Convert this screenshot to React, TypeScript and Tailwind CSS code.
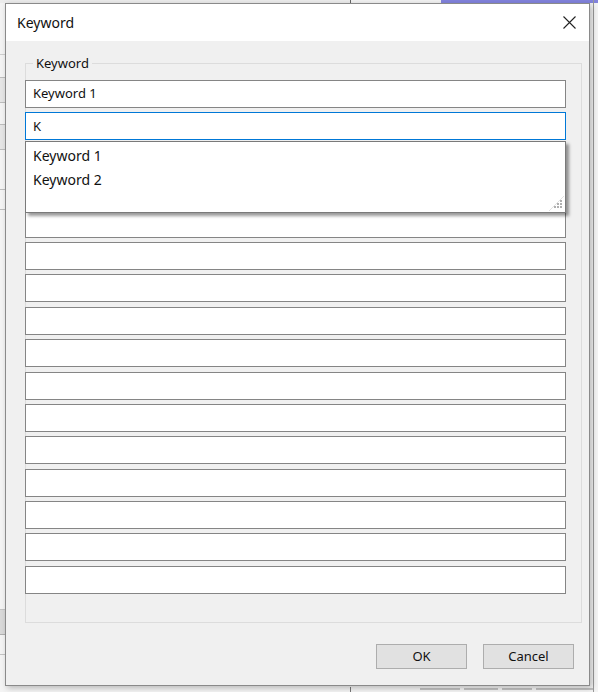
const FONT = { fontFamily: '"Noto Sans", "Open Sans", "Liberation Sans", sans-serif' }

const emptyRows = Array.from({ length: 14 })

function CloseIcon() {
  return (
    <svg width="13" height="13" viewBox="0 0 13 13" fill="none" stroke="#222" strokeWidth="1.1">
      <path d="M0.5 0.5 L12.5 12.5 M12.5 0.5 L0.5 12.5" />
    </svg>
  )
}

function ResizeGrip() {
  return (
    <svg width="16" height="16" viewBox="0 0 16 16" className="absolute right-[1px] bottom-[1px]">
      <path d="M16 1 L1 16" stroke="#e2e2e2" strokeWidth="1" />
      <g fill="#b0b0b0">
        <rect x="12" y="5" width="2" height="2" />
        <rect x="9" y="8" width="2" height="2" />
        <rect x="12" y="8" width="2" height="2" />
        <rect x="6" y="11" width="2" height="2" />
        <rect x="9" y="11" width="2" height="2" />
        <rect x="12" y="11" width="2" height="2" />
      </g>
    </svg>
  )
}

function Field({ value, focused }: { value?: string; focused?: boolean }) {
  return (
    <div
      className={`h-[28px] w-[541px] -ml-px flex items-center pl-[7px] bg-white text-[13px] text-[#111] border ${
        focused ? 'border-[#0078d7]' : 'border-[#858585]'
      }`}
    >
      {value}
    </div>
  )
}

export default function App() {
  return (
    <div className="relative w-[598px] h-[692px] overflow-hidden bg-[#f4f4f4]" style={FONT}>
      {/* app behind the dialog */}
      <div className="absolute left-0 top-0 w-[598px] h-[3px] flex">
        <div className="w-[350px] bg-[#ececec]" />
        <div className="w-px bg-[#666]" />
        <div className="w-[90px] bg-[#f2f2f2]" />
        <div className="flex-1 bg-[#8283dc]" />
      </div>
      <div className="absolute left-0 top-[40px] w-[5px] flex flex-col">
        <div className="h-[15px] border-b border-[#cfcfcf]" />
        <div className="h-[23px] border-b border-[#bdbdbd]" />
        <div className="h-[25px] border-b border-[#bdbdbd] bg-[#e6e6e6]" />
        <div className="h-[22px] border-b border-[#bdbdbd]" />
        <div className="h-[25px] border-b border-[#bdbdbd] bg-[#e6e6e6]" />
        <div className="h-[40px] border-b border-[#bdbdbd]" />
        <div className="h-[20px] border-b border-[#bdbdbd]" />
      </div>
      <div className="absolute left-0 top-[590px] w-[5px] flex flex-col">
        <div className="h-[20px] border-b border-[#c4c4c4]" />
        <div className="h-[25px] border-b border-[#b0b0b0] bg-[#d9d9d9]" />
        <div className="h-[20px] border-b border-[#c4c4c4]" />
      </div>
      <div className="absolute left-[350px] top-[687px] w-px h-[5px] bg-[#777]" />
      <div className="absolute left-[420px] top-[688px] flex items-start gap-[4px]">
        <div className="w-[40px] h-[2px] bg-[#c2c2c2]" />
        <div className="w-[34px] h-[2px] bg-[#c2c2c2]" />
        <div className="w-[30px] h-[2px] bg-[#c2c2c2]" />
        <div className="w-[58px] h-[2px] bg-[#c2c2c2]" />
      </div>
      <div className="absolute left-[593px] top-0 w-px h-[692px] bg-[#9a9a9a]" />

      {/* dialog */}
      <div className="absolute left-[5px] top-[3px] w-[585px] h-[683px] flex flex-col border border-[#8a8a8a] bg-[#f0f0f0] shadow-[2px_2px_6px_rgba(0,0,0,0.25)]">
        <div className="h-[37px] shrink-0 flex items-center justify-between bg-white pl-[11px] pr-[13px]">
          <span className="text-[14px] text-[#111]">Keyword</span>
          <CloseIcon />
        </div>

        <div className="flex flex-col flex-1">
          <div className="relative mt-[22px] ml-[19px] w-[557px] h-[560px] border border-[#dcdcdc]">
            <span className="absolute -top-[10px] left-[7px] px-[3px] bg-[#f0f0f0] text-[13px] leading-[18px] text-[#111]">
              Keyword
            </span>
            <div className="flex flex-col gap-[4.4px] pt-[16px]">
              <Field value="Keyword 1" />
              <div className="relative">
                <Field value="K" focused />
                <div className="absolute z-10 top-[29px] -left-px w-[541px] h-[72px] bg-white border border-[#7a7a7a] shadow-[3px_3px_3px_rgba(0,0,0,0.4)] pt-px">
                  <div className="h-[24px] flex items-center pl-[7px] text-[14px] text-[#111]">Keyword 1</div>
                  <div className="h-[24px] flex items-center pl-[7px] text-[14px] text-[#111]">Keyword 2</div>
                  <ResizeGrip />
                </div>
              </div>
              {emptyRows.map((_, i) => (
                <Field key={i} />
              ))}
            </div>
          </div>

          <div className="flex justify-end gap-[16px] mt-[21px] pr-[15px]">
            <button className="w-[91px] h-[25px] bg-[#e1e1e1] border border-[#adadad] text-[13px] text-[#111]">OK</button>
            <button className="w-[91px] h-[25px] bg-[#e1e1e1] border border-[#adadad] text-[13px] text-[#111]">Cancel</button>
          </div>
        </div>
      </div>
    </div>
  )
}
